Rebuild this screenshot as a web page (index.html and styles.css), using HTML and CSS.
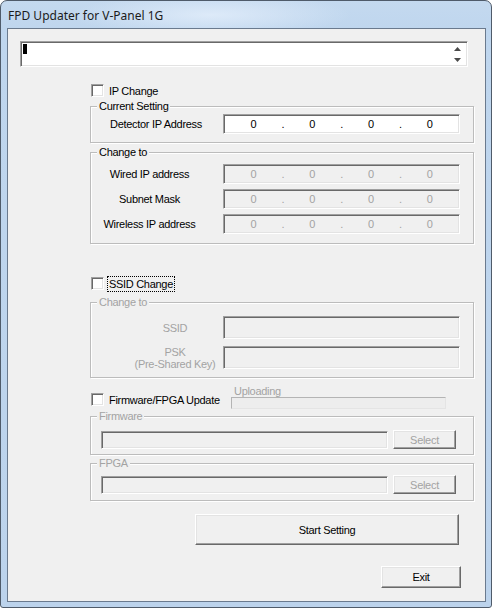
FILE: index.html
```html
<!DOCTYPE html>
<html>
<head>
<meta charset="utf-8">
<title>FPD Updater for V-Panel 1G</title>
<link rel="stylesheet" href="styles.css">
</head>
<body>
<div class="window">
  <div class="titlebar"><span class="title">FPD Updater for V-Panel 1G</span></div>
  <div class="client">
    <div class="log">
      <span class="caret"></span>
      <div class="spin">
        <svg class="arrow" width="7" height="4" viewBox="0 0 7 4"><path d="M0 4 L3.5 0 L7 4 Z" fill="#4a4a4a"/></svg>
        <svg class="arrow" width="7" height="4" viewBox="0 0 7 4"><path d="M0 0 L7 0 L3.5 4 Z" fill="#4a4a4a"/></svg>
      </div>
    </div>

    <div class="main">
      <div class="check-row row-ip">
        <span class="checkbox"></span><span class="check-label">IP Change</span>
      </div>

      <div class="group group-current">
        <span class="legend">Current Setting</span>
        <div class="field-row">
          <span class="row-label lbl-detector">Detector IP Address</span>
          <div class="ip-field">
            <span class="oct">0</span><span class="dot">.</span><span class="oct">0</span><span class="dot">.</span><span class="oct">0</span><span class="dot">.</span><span class="oct">0</span>
          </div>
        </div>
      </div>

      <div class="group group-change">
        <span class="legend">Change to</span>
        <div class="field-row">
          <span class="row-label lbl-change">Wired IP address</span>
          <div class="ip-field disabled">
            <span class="oct">0</span><span class="dot">.</span><span class="oct">0</span><span class="dot">.</span><span class="oct">0</span><span class="dot">.</span><span class="oct">0</span>
          </div>
        </div>
        <div class="field-row">
          <span class="row-label lbl-change">Subnet Mask</span>
          <div class="ip-field disabled">
            <span class="oct">0</span><span class="dot">.</span><span class="oct">0</span><span class="dot">.</span><span class="oct">0</span><span class="dot">.</span><span class="oct">0</span>
          </div>
        </div>
        <div class="field-row">
          <span class="row-label lbl-change">Wireless IP address</span>
          <div class="ip-field disabled">
            <span class="oct">0</span><span class="dot">.</span><span class="oct">0</span><span class="dot">.</span><span class="oct">0</span><span class="dot">.</span><span class="oct">0</span>
          </div>
        </div>
      </div>

      <div class="check-row row-ssid">
        <span class="checkbox"></span><span class="check-label focus">SSID Change</span>
      </div>

      <div class="group group-ssid">
        <span class="legend gray">Change to</span>
        <div class="field-row tall">
          <span class="row-label lbl-ssid gray">SSID</span>
          <div class="text-field disabled"></div>
        </div>
        <div class="field-row tall">
          <span class="row-label lbl-ssid two-line gray"><span class="ln">PSK</span><span class="ln">(Pre-Shared Key)</span></span>
          <div class="text-field disabled"></div>
        </div>
      </div>

      <div class="fw-row">
        <div class="check-row row-fw">
          <span class="checkbox"></span><span class="check-label">Firmware/FPGA Update</span>
        </div>
        <div class="upload">
          <span class="upload-label gray">Uploading</span>
          <div class="progress"></div>
        </div>
      </div>

      <div class="group group-file group-firmware">
        <span class="legend gray">Firmware</span>
        <div class="file-row">
          <div class="file-field"></div>
          <span class="btn btn-select">Select</span>
        </div>
      </div>

      <div class="group group-file group-fpga">
        <span class="legend gray">FPGA</span>
        <div class="file-row">
          <div class="file-field"></div>
          <span class="btn btn-select">Select</span>
        </div>
      </div>

      <span class="btn btn-start">Start Setting</span>
      <span class="btn btn-exit">Exit</span>
    </div>
  </div>
</div>
</body>
</html>
```

FILE: styles.css
```css
* { box-sizing: border-box; }
html, body { margin: 0; padding: 0; }
body {
  width: 492px;
  height: 608px;
  overflow: hidden;
  background: #ffffff;
  font-family: "Liberation Sans", Arial, sans-serif;
  font-size: 11px;
  letter-spacing: -0.3px;
  color: #000;
}

.window {
  width: 492px;
  height: 608px;
  border: 1px solid #4f5b6a;
  border-radius: 7px 7px 3px 3px;
  background:
    radial-gradient(ellipse 140px 22px at 210px 14px, rgba(230,240,252,0.75), rgba(230,240,252,0) 100%),
    linear-gradient(180deg, #c4d9ef 0, #bfd6ee 28px, #bcd3ec 100%);
  display: flex;
  flex-direction: column;
  overflow: hidden;
}

.titlebar {
  height: 27px;
  flex: none;
  display: flex;
  align-items: center;
  padding-left: 7px;
  padding-top: 1px;
}
.title {
  font-family: "Noto Sans", "Open Sans", sans-serif;
  font-size: 12px;
  letter-spacing: 0;
  color: #1b1b1b;
}

.client {
  flex: 1;
  margin: 0 5px 5px 6px;
  border: 1px solid #6a7a8e;
  background: #f0f0f0;
  display: flex;
  flex-direction: column;
}

/* log edit box */
.log {
  margin: 12px 0 0 12px;
  width: 448px;
  height: 26px;
  flex: none;
  background: #fff;
  border-style: solid;
  border-width: 1px;
  border-color: #a0a0a0 #ffffff #ffffff #a0a0a0;
  box-shadow: inset 1px 1px 0 #696969, inset -1px -1px 0 #e3e3e3;
  display: flex;
  padding: 1px 2px 1px 2px;
}
.caret {
  width: 4px;
  height: 10px;
  background: #000;
  margin-top: 1px;
}
.spin {
  margin-left: auto;
  width: 15px;
  display: flex;
  flex-direction: column;
  align-items: center;
  justify-content: space-between;
  padding: 4px 0 3px;
}
.arrow { display: block; }

/* main column */
.main {
  margin-left: 82px;
  width: 384px;
  display: flex;
  flex-direction: column;
  align-items: flex-start;
}

.check-row {
  height: 15px;
  display: flex;
  align-items: center;
  flex: none;
}
.row-ip { margin-top: 16px; padding-left: 1px; }
.row-ssid { margin-top: 32px; padding-left: 1px; }
.checkbox {
  width: 13px;
  height: 13px;
  flex: none;
  background: #fff;
  border-style: solid;
  border-width: 1px;
  border-color: #a0a0a0 #ffffff #ffffff #a0a0a0;
  box-shadow: inset 1px 1px 0 #696969, inset -1px -1px 0 #e3e3e3;
}
.check-label {
  margin-left: 4px;
  line-height: 14px;
  padding: 0 1px;
}
.check-label.focus {
  outline: 1px dotted #000;
  outline-offset: 0;
}

.gray { color: #a3a3a3; }

/* group boxes */
.group {
  position: relative;
  width: 384px;
  flex: none;
  border: 1px solid #bcbcbc;
  box-shadow: inset 1px 1px 0 #fff, 1px 1px 0 #fff;
  display: flex;
  flex-direction: column;
}
.legend {
  position: absolute;
  top: -8px;
  left: 6px;
  line-height: 14px;
  padding: 0 2px;
  background: #f0f0f0;
  white-space: nowrap;
}
.group-current { margin-top: 8px; padding: 7px 13px 8px 9px; }
.group-change { margin-top: 9px; padding: 11px 13px 9px 9px; gap: 5px; }
.group-ssid { margin-top: 11px; padding: 13px 13px 8px 9px; gap: 7px; }

.field-row {
  display: flex;
  align-items: center;
  height: 20px;
}
.field-row.tall { height: 23px; }

.row-label {
  width: 123px;
  flex: none;
  text-align: center;
  line-height: 12px;
  white-space: nowrap;
}
.lbl-detector { padding-right: 11px; }
.lbl-change { padding-right: 24px; }
.lbl-ssid { padding-left: 27px; }
.two-line { display: flex; flex-direction: column; align-items: center; padding-top: 1px; }
.two-line .ln { display: block; height: 12px; line-height: 12px; }

.ip-field, .text-field {
  width: 237px;
  flex: none;
  height: 20px;
  background: #fff;
  border-style: solid;
  border-width: 1px;
  border-color: #a0a0a0 #ffffff #ffffff #a0a0a0;
  box-shadow: inset 1px 1px 0 #696969, inset -1px -1px 0 #e3e3e3;
  display: flex;
  align-items: center;
}
.text-field { height: 23px; }
.ip-field.disabled, .text-field.disabled { background: #f0f0f0; color: #a3a3a3; }
.oct { flex: 1; text-align: center; }
.dot { width: 0; display: flex; justify-content: center; }

/* firmware row */
.fw-row {
  margin-top: 7px;
  height: 24px;
  display: flex;
  flex: none;
}
.row-fw { margin-top: 7px; padding-left: 1px; width: 141px; }
.upload {
  display: flex;
  flex-direction: column;
}
.upload-label {
  line-height: 12px;
  height: 12px;
  margin-left: 3px;
  margin-top: 0;
}
.progress {
  width: 215px;
  height: 12px;
  border-style: solid;
  border-width: 1px;
  border-color: #b4b4b4 #e4e4e4 #e4e4e4 #b4b4b4;
  background: #ededed;
}

.group-file { padding: 13px 17px 5px 10px; }
.group-firmware { margin-top: 7px; }
.group-fpga { margin-top: 8px; padding-top: 11px; padding-bottom: 6px; }
.file-row {
  display: flex;
  align-items: center;
  height: 19px;
}
.file-field {
  width: 287px;
  height: 18px;
  background: #f0f0f0;
  border-style: solid;
  border-width: 1px;
  border-color: #a0a0a0 #ffffff #ffffff #a0a0a0;
  box-shadow: inset 1px 1px 0 #696969, inset -1px -1px 0 #e3e3e3;
}

/* buttons */
.btn {
  display: flex;
  align-items: center;
  justify-content: center;
  flex: none;
  background: #f0f0f0;
  border-style: solid;
  border-width: 1px;
  border-color: #ffffff #696969 #696969 #ffffff;
  box-shadow: inset -1px -1px 0 #a0a0a0, inset 1px 1px 0 #e3e3e3;
}
.btn-select {
  margin-left: 5px;
  width: 63px;
  height: 19px;
  color: #a3a3a3;
}
.btn-start {
  margin-top: 13px;
  margin-left: 105px;
  width: 264px;
  height: 31px;
}
.btn-exit {
  margin-top: 21px;
  margin-left: 291px;
  width: 80px;
  height: 22px;
}
```
